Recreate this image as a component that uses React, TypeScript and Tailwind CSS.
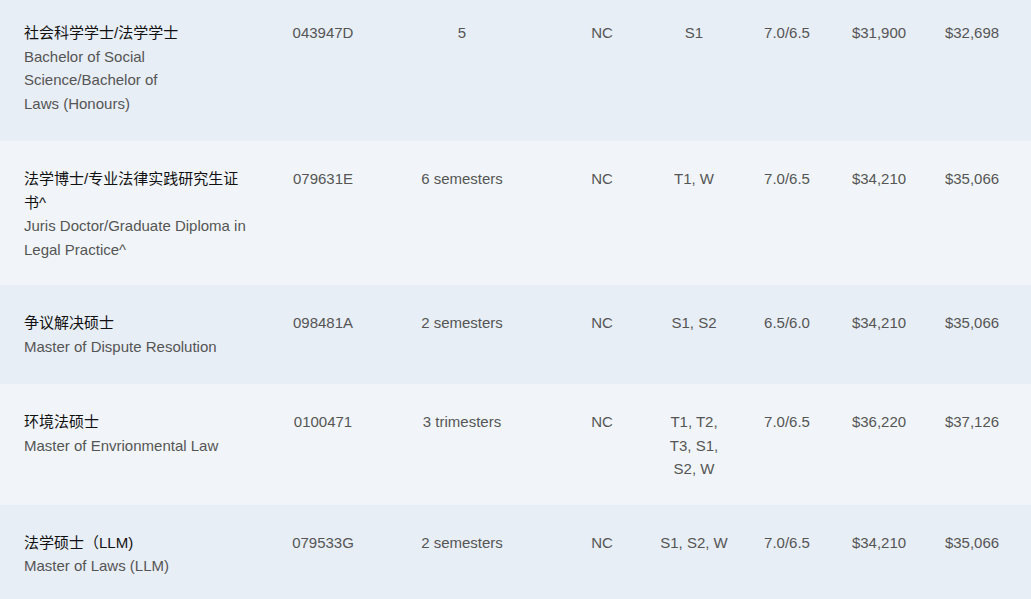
import React from "react"

type Course = {
  zh: string
  en: string[]
  code: string
  duration: string
  nc: string
  intake: string[]
  ielts: string
  fee2020: string
  fee2021: string
}

const courses: Course[] = [
  {
    zh: "社会科学学士/法学学士",
    en: ["Bachelor of Social", "Science/Bachelor of", "Laws (Honours)"],
    code: "043947D",
    duration: "5",
    nc: "NC",
    intake: ["S1"],
    ielts: "7.0/6.5",
    fee2020: "$31,900",
    fee2021: "$32,698",
  },
  {
    zh: "法学博士/专业法律实践研究生证书^",
    en: ["Juris Doctor/Graduate Diploma in", "Legal Practice^"],
    code: "079631E",
    duration: "6 semesters",
    nc: "NC",
    intake: ["T1, W"],
    ielts: "7.0/6.5",
    fee2020: "$34,210",
    fee2021: "$35,066",
  },
  {
    zh: "争议解决硕士",
    en: ["Master of Dispute Resolution"],
    code: "098481A",
    duration: "2 semesters",
    nc: "NC",
    intake: ["S1, S2"],
    ielts: "6.5/6.0",
    fee2020: "$34,210",
    fee2021: "$35,066",
  },
  {
    zh: "环境法硕士",
    en: ["Master of Envrionmental Law"],
    code: "0100471",
    duration: "3 trimesters",
    nc: "NC",
    intake: ["T1, T2,", "T3, S1,", "S2, W"],
    ielts: "7.0/6.5",
    fee2020: "$36,220",
    fee2021: "$37,126",
  },
  {
    zh: "法学硕士（LLM)",
    en: ["Master of Laws (LLM)"],
    code: "079533G",
    duration: "2 semesters",
    nc: "NC",
    intake: ["S1, S2, W"],
    ielts: "7.0/6.5",
    fee2020: "$34,210",
    fee2021: "$35,066",
  },
]

export default function App() {
  return (
    <div
      className="w-[1031px] h-[599px] overflow-hidden bg-[#f1f5f9] text-[15px] leading-[23.5px] text-[#555555]"
      style={{ fontFamily: '"Liberation Sans", Arial, "Noto Sans CJK SC", sans-serif' }}
    >
      <div className="-mt-[5px]">
        {courses.map((c, i) => (
          <div
            key={i}
            className={`grid grid-cols-[273px_100px_178px_102px_82px_104px_80px_106px_1fr] min-h-[99px] pt-[26px] ${
              i === 0 ? "pb-[26px]" : "pb-[24px]"
            } ${i % 2 === 0 ? "bg-[#e8eef5]" : "bg-[#f1f5f9]"}`}
          >
            <div className="pl-6 pr-6">
              <div className="text-[#111111]">{c.zh}</div>
              {c.en.map((line, j) => (
                <div key={j}>{line}</div>
              ))}
            </div>
            <div className="text-center px-1">{c.code}</div>
            <div className="text-center px-1">{c.duration}</div>
            <div className="text-center px-1">{c.nc}</div>
            <div className="text-center whitespace-nowrap">
              {c.intake.map((line, j) => (
                <div key={j}>{line}</div>
              ))}
            </div>
            <div className="text-center px-1">{c.ielts}</div>
            <div className="text-center px-1">{c.fee2020}</div>
            <div className="text-center px-1">{c.fee2021}</div>
            <div />
          </div>
        ))}
      </div>
    </div>
  )
}
